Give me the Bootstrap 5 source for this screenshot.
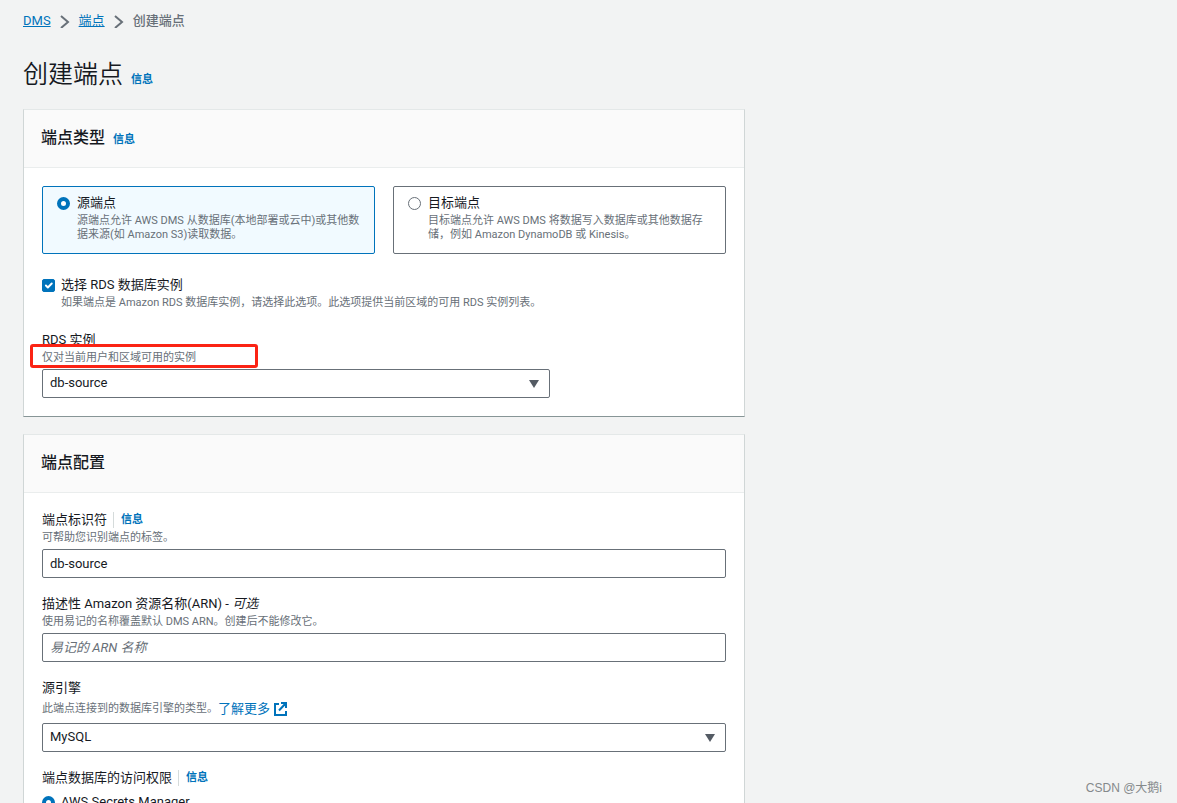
<!DOCTYPE html>
<html lang="zh-CN">
<head>
<meta charset="utf-8">
<meta name="viewport" content="width=device-width, initial-scale=1">
<title>创建端点</title>
<link href="https://cdn.jsdelivr.net/npm/bootstrap@5.3.0/dist/css/bootstrap.min.css" rel="stylesheet">
<style>
:root { --ink: #16191f; --muted-ink: #687078; --link: #0073bb; --line: #eaeded; --edge: #687078; }
body { background: #f2f3f3; color: var(--ink); font: 13px/18px Roboto, "Noto Sans CJK SC", sans-serif; }
a { color: var(--link); }
.page { padding: 12px 23px 0; }
.form-column { max-width: 722px; }
.breadcrumb { line-height: 18px; gap: 8px; margin-bottom: 29px; }
.breadcrumb .current { color: var(--muted-ink); font-weight: 500; }
.page-title { font-size: 25px; line-height: 32px; font-weight: 350; margin: 0; }
.title-row { margin-bottom: 18px; }
.info { font-size: 11px; font-weight: 600; text-decoration: none; }
.label-info { border-left: 1px solid #d5dbdb; padding-left: 7px; line-height: 16px; }
.label-row { gap: 6px; }
.panel { background: #fff; border: 1px solid; border-color: #e4e8e8 #d0d6d6 #879596 #d0d6d6; border-radius: 0; margin-bottom: 17px; }
.panel > .card-header { background: #fafafa; border-bottom: 1px solid var(--line); padding: 16px 17px 17px; border-radius: 0; }
.panel h2 { font-size: 16px; line-height: 24px; font-weight: 500; margin: 0; }
.panel > .card-body { padding: 18px; }
.tiles { gap: 18px; margin-bottom: 22px; }
.tile { border: 1px solid var(--edge); border-radius: 2px; padding: 7px 14px 11px; gap: 7px; cursor: pointer; }
.tile.selected { border-color: var(--link); background: #f1faff; }
.tile .hint { line-height: 14px; margin-top: 2px; }
.hint { display: block; font-size: 11px; line-height: 18px; color: var(--muted-ink); }
.check-row { gap: 6px; }
.rds-check { margin-bottom: 19px; }
.form-check-input { width: 13px; height: 13px; flex: none; margin: 3px 0 0; border-color: var(--muted-ink); background-size: 13px; }
.form-check-input[type=radio]:checked { background: #fff; border: 4px solid var(--link); }
.form-check-input[type=checkbox] { border-radius: 2px; }
.form-check-input[type=checkbox]:checked { background-color: var(--link); border-color: var(--link); }
.form-control, .form-select { height: 29px; margin-top: 2px; padding: 0 7px 1px; font-size: 13px; line-height: 18px; color: var(--ink); border: 1px solid var(--edge); border-radius: 2px; }
.form-control::placeholder { color: var(--muted-ink); font-style: italic; }
.form-select { background-image: url("data:image/svg+xml,%3Csvg xmlns='http://www.w3.org/2000/svg' viewBox='0 0 10 8'%3E%3Cpath fill='%23545b64' d='M0 0h10L5 8z'/%3E%3C/svg%3E"); background-size: 10px 8px; background-position: right 10px center; padding-right: 28px; }
.field { margin-bottom: 17px; }
.engine-hint { line-height: 24px; }
.learn { font-size: 13px; }
.access-options { margin-top: 6px; }
.half-wide { max-width: 508px; }
.callout-frame { position: absolute; inset: -5px auto -1px -12px; width: 228px; border: 3px solid #fb2314; border-radius: 3px; pointer-events: none; }
.watermark { position: absolute; right: 15px; bottom: 6px; color: #85898b; font: 12px/18px "Liberation Sans", "Noto Sans CJK SC", sans-serif; }
</style>
</head>
<body>
<div class="page vh-100 overflow-hidden position-relative">
  <nav aria-label="breadcrumb">
    <ol class="breadcrumb align-items-center">
      <li><a href="#">DMS</a></li>
      <li class="d-flex" aria-hidden="true"><svg width="12" height="14" viewBox="0 0 12 14" fill="none" stroke="#687078" stroke-width="2"><path d="M2 2l7 6-7 6"/></svg></li>
      <li><a href="#">端点</a></li>
      <li class="d-flex" aria-hidden="true"><svg width="12" height="14" viewBox="0 0 12 14" fill="none" stroke="#687078" stroke-width="2"><path d="M2 2l7 6-7 6"/></svg></li>
      <li class="current" aria-current="page">创建端点</li>
    </ol>
  </nav>
  <main class="form-column">
    <div class="d-flex align-items-baseline gap-2 title-row">
      <h1 class="page-title">创建端点</h1><a class="info" href="#">信息</a>
    </div>

    <section class="card panel">
      <div class="card-header d-flex align-items-baseline gap-2"><h2>端点类型</h2><a class="info" href="#">信息</a></div>
      <div class="card-body">
        <div class="d-flex tiles">
          <label class="col tile selected d-flex">
            <input class="form-check-input" type="radio" name="kind" checked>
            <span>源端点<span class="hint">源端点允许 AWS DMS 从数据库(本地部署或云中)或其他数据来源(如 Amazon S3)读取数据。</span></span>
          </label>
          <label class="col tile d-flex">
            <input class="form-check-input" type="radio" name="kind">
            <span>目标端点<span class="hint">目标端点允许 AWS DMS 将数据写入数据库或其他数据存储，例如 Amazon DynamoDB 或 Kinesis。</span></span>
          </label>
        </div>
        <label class="d-flex check-row rds-check">
          <input class="form-check-input" type="checkbox" checked>
          <span>选择 RDS 数据库实例<span class="hint">如果端点是 Amazon RDS 数据库实例，请选择此选项。此选项提供当前区域的可用 RDS 实例列表。</span></span>
        </label>
        <div class="half-wide">
          <label class="d-block" for="rds">RDS 实例</label>
          <div class="hint position-relative">仅对当前用户和区域可用的实例<span class="callout-frame"></span></div>
          <select class="form-select" id="rds"><option>db-source</option></select>
        </div>
      </div>
    </section>

    <section class="card panel">
      <div class="card-header"><h2>端点配置</h2></div>
      <div class="card-body">
        <div class="field">
          <div class="d-flex align-items-center label-row"><label for="ident">端点标识符</label><a class="info label-info" href="#">信息</a></div>
          <div class="hint">可帮助您识别端点的标签。</div>
          <input class="form-control" id="ident" type="text" value="db-source">
        </div>
        <div class="field">
          <label class="d-block" for="arn">描述性 Amazon 资源名称(ARN) - <i>可选</i></label>
          <div class="hint">使用易记的名称覆盖默认 DMS ARN。创建后不能修改它。</div>
          <input class="form-control" id="arn" type="text" placeholder="易记的 ARN 名称">
        </div>
        <div class="field">
          <label class="d-block" for="engine">源引擎</label>
          <div class="hint engine-hint d-flex align-items-center">此端点连接到的数据库引擎的类型。
            <a class="learn d-flex align-items-center gap-1 text-decoration-none" href="#">了解更多<svg width="13" height="14" viewBox="0 0 13 14" fill="none" stroke="#0073bb" stroke-width="2"><path d="M5 2H1v11h11V9M7 1h5v5M12 1L5 8.500"/></svg></a>
          </div>
          <select class="form-select" id="engine"><option>MySQL</option></select>
        </div>
        <div class="d-flex align-items-center label-row"><span id="access">端点数据库的访问权限</span><a class="info label-info" href="#">信息</a></div>
        <div role="radiogroup" aria-labelledby="access" class="access-options">
          <label class="d-flex check-row"><input class="form-check-input" type="radio" name="access" checked>AWS Secrets Manager</label>
        </div>
      </div>
    </section>
  </main>
  <div class="watermark">CSDN @大鹅i</div>
</div>
</body>
</html>
